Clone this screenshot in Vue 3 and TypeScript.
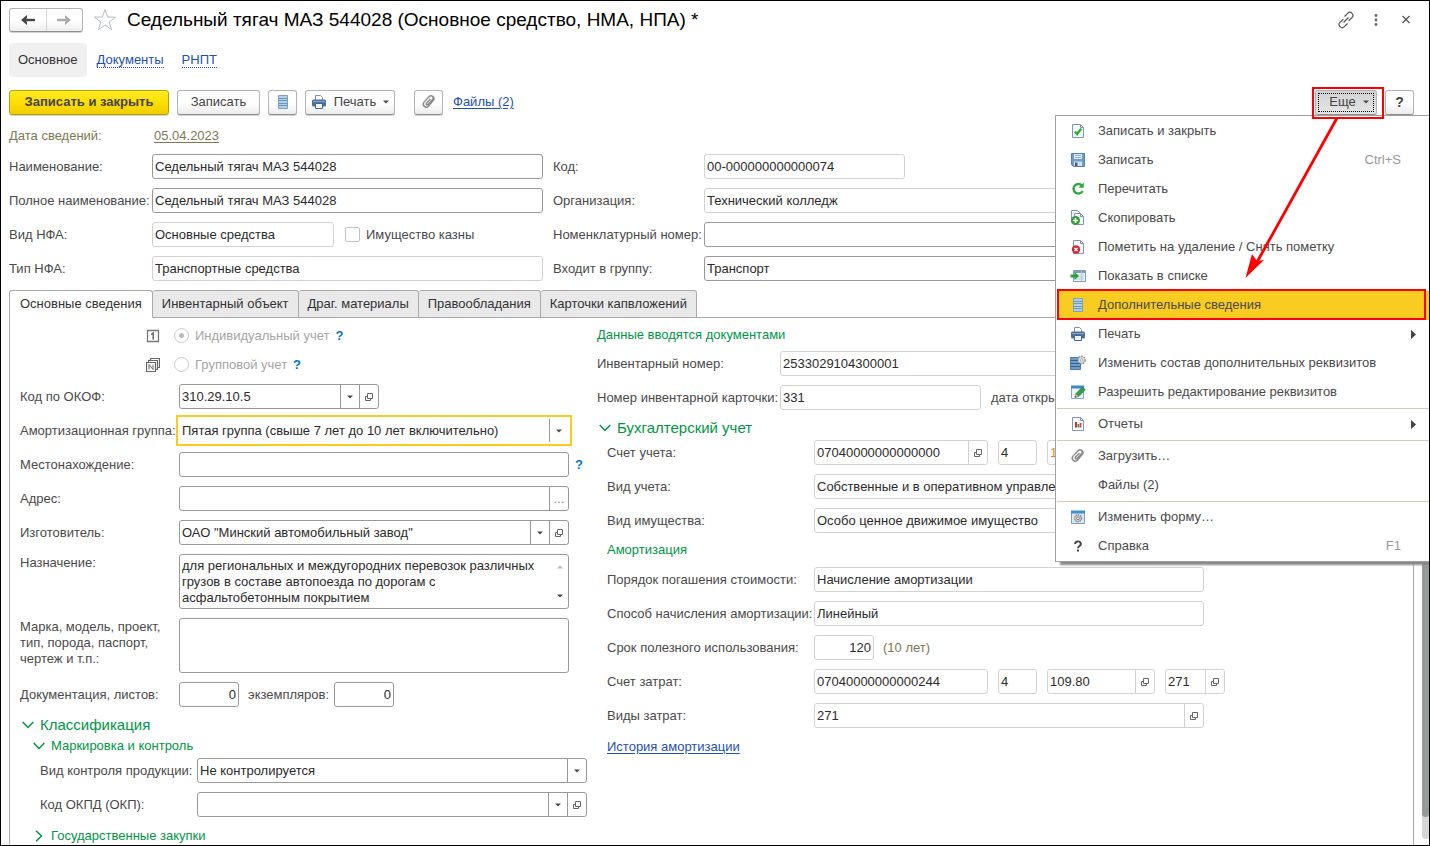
<script setup lang="ts">
import { ref } from 'vue'

interface MenuItem {
  id: string
  text: string
  icon?: string
  shortcut?: string
  submenu?: boolean
  active?: boolean
}

const menuGroups: MenuItem[][] = [
  [
    { id: 'save-close', text: 'Записать и закрыть', icon: 'doc-check' },
    { id: 'save', text: 'Записать', icon: 'floppy', shortcut: 'Ctrl+S' },
    { id: 'reread', text: 'Перечитать', icon: 'refresh' },
    { id: 'copy', text: 'Скопировать', icon: 'copy-add' },
    { id: 'mark', text: 'Пометить на удаление / Снять пометку', icon: 'doc-delete' },
    { id: 'show', text: 'Показать в списке', icon: 'list-go' },
    { id: 'extra', text: 'Дополнительные сведения', icon: 'lines', active: true },
    { id: 'print', text: 'Печать', icon: 'printer', submenu: true },
    { id: 'props', text: 'Изменить состав дополнительных реквизитов', icon: 'lines-gear' },
    { id: 'allow', text: 'Разрешить редактирование реквизитов', icon: 'edit' },
  ],
  [{ id: 'reports', text: 'Отчеты', icon: 'report', submenu: true }],
  [
    { id: 'upload', text: 'Загрузить…', icon: 'clip' },
    { id: 'files', text: 'Файлы (2)' },
  ],
  [
    { id: 'form', text: 'Изменить форму…', icon: 'form-gear' },
    { id: 'help', text: 'Справка', icon: 'question', shortcut: 'F1' },
  ],
]

const tabs = ['Основные сведения', 'Инвентарный объект', 'Драг. материалы', 'Правообладания', 'Карточки капвложений']
const activeTab = ref(tabs[0])

const name = ref('Седельный тягач МАЗ 544028')
const fullName = ref('Седельный тягач МАЗ 544028')
const group = ref('Транспорт')
const okof = ref('310.29.10.5')
const maker = ref('ОАО "Минский автомобильный завод"')
const purpose = ref('для региональных и междугородних перевозок различных грузов в составе автопоезда по дорогам с асфальтобетонным покрытием')
const accounting = ref('single')
</script>

<template>
  <svg class="sprite" aria-hidden="true">
    <symbol id="doc-check" viewBox="0 0 16 16">
      <path d="M2.5 1.5h8l3 3v10h-11z" fill="#f7fafc" stroke="#8297aa" />
      <path d="M10.5 1.5v3h3" fill="none" stroke="#8297aa" />
      <path d="M5 8.6l2.2 2.4 4-5.4" fill="none" stroke="#27b33a" stroke-width="2.4" />
    </symbol>
    <symbol id="floppy" viewBox="0 0 16 16">
      <path d="M1.5 1.5h13v13h-11l-2-2z" fill="#6d9ccd" stroke="#5580aa" />
      <path d="M4 2h8v5H4z" fill="#dfeaf4" />
      <path d="M5 3.5h6M5 5.5h6" stroke="#8fb0cf" />
      <path d="M4 9.5h8V14H4z" fill="#d5e1ec" />
      <path d="M5 10.5h2.5V14H5z" fill="#3c618a" />
    </symbol>
    <symbol id="refresh" viewBox="0 0 16 16">
      <path d="M12 4.6A4.8 4.8 0 1 0 12.6 10" fill="none" stroke="#33a83c" stroke-width="2.4" />
      <path d="M8.6 6.8h5.2V1.4z" fill="#33a83c" />
    </symbol>
    <symbol id="copy-add" viewBox="0 0 16 16">
      <path d="M1.5.5h6l3 3v9h-9z" fill="#eef3f7" stroke="#8297aa" />
      <path d="M4.5 3.5h6l3 3v8h-9z" fill="#f7fafc" stroke="#8297aa" />
      <path d="M10.5 3.5v3h3" fill="none" stroke="#8297aa" />
      <circle cx="5.5" cy="10.5" r="4.5" fill="#2f9e3a" />
      <path d="M5.5 8v5M3 10.5h5" stroke="#fff" stroke-width="1.6" />
    </symbol>
    <symbol id="doc-delete" viewBox="0 0 16 16">
      <path d="M3.5 1.5h7l3 3v10h-10z" fill="#f7fafc" stroke="#8297aa" />
      <path d="M10.5 1.5v3h3" fill="none" stroke="#8297aa" />
      <circle cx="6" cy="10.5" r="4.2" fill="#d22c36" />
      <path d="M4.5 9l3 3M7.5 9l-3 3" stroke="#fff" stroke-width="1.3" />
    </symbol>
    <symbol id="list-go" viewBox="0 0 16 16">
      <path d="M3.5 2.5h12v11h-12z" fill="#f4f8fb" stroke="#7f9cb8" />
      <path d="M4 4h11" stroke="#7f9cb8" stroke-width="2" />
      <path d="M11.5 3v10M5 7h9M5 9h9M5 11h9" stroke="#b3c6d6" />
      <path d="M.5 6.500h4V4L9 8l-4.500 4V9.500h-4z" fill="#27a23a" />
    </symbol>
    <symbol id="lines" viewBox="0 0 16 16">
      <path d="M3.5 1.5h9v13h-9z" fill="#b4cfe6" stroke="#7ba0c2" />
      <path d="M4 4.5h8M4 6.500h8M4 9.500h8M4 11.500h8" stroke="#6c97bd" />
    </symbol>
    <symbol id="printer" viewBox="0 0 16 16">
      <path d="M4.5 6V1.500h5l2 2V6" fill="#fff" stroke="#7893ab" />
      <rect x="1" y="5.500" width="14" height="7" rx="1.500" fill="#4d7298" />
      <path d="M2 7.500h12" stroke="#8baac6" />
      <path d="M4.500 9.500h7v5h-7z" fill="#f2f6fa" stroke="#466a8f" />
    </symbol>
    <symbol id="lines-gear" viewBox="0 0 16 16">
      <path d="M.5 2.500h10v12h-10z" fill="#6f9ecb" stroke="#4e7ba6" />
      <path d="M1 5.500h9M1 8.500h9M1 11.500h9" stroke="#355f8a" />
      <circle cx="11.500" cy="5" r="3.500" fill="#e4e6e8" stroke="#85898d" stroke-width="1.800" stroke-dasharray="1.600 1" />
      <circle cx="11.500" cy="5" r="3.300" fill="#e0e2e4" stroke="#999" stroke-width=".6" />
      <circle cx="11.500" cy="5" r="1.200" fill="#fff" stroke="#888" stroke-width=".6" />
    </symbol>
    <symbol id="edit" viewBox="0 0 16 16">
      <path d="M1.500 2.500h12v12h-12z" fill="#edf5fb" stroke="#83a7c4" />
      <path d="M1 3h13" stroke="#3c8bc9" stroke-width="3" />
      <path d="M5 13.500l1-4 6.500-6.500 2.800 2.800L9 12.300z" fill="#2f9e44" stroke="#2b6e3b" stroke-width=".6" />
      <path d="M5 13.500l.9-3.600 2.800 2.500z" fill="#e0b27c" />
      <path d="M5 13.500l.4-1.500 1.100 1z" fill="#333" />
    </symbol>
    <symbol id="report" viewBox="0 0 16 16">
      <path d="M2.500 1.500h8l3 3v10h-11z" fill="#f7fafc" stroke="#8297aa" />
      <path d="M10.500 1.500v3h3" fill="none" stroke="#8297aa" />
      <path d="M5 6h2v5.500H5z" fill="#d92b2b" />
      <path d="M7.500 8h1.800v3.500H7.500z" fill="#2ba044" />
      <path d="M9.700 7h1.800v4.500H9.700z" fill="#e04a3a" />
    </symbol>
    <symbol id="clip" viewBox="0 0 16 16">
      <path d="M12.800 5.800L7.600 12a3 3 0 0 1-4.600-3.900l5.200-5.600a2.200 2.200 0 0 1 3.400 2.900L7 10.500a1 1 0 0 1-1.600-1.300L9.400 4.900M12.800 5.800a2.600 2.600 0 0 0-2.500-3.800" fill="none" stroke="#8b8b8b" stroke-width="1.400" />
    </symbol>
    <symbol id="form-gear" viewBox="0 0 16 16">
      <path d="M1.500 2.500h13v12h-13z" fill="#dde7ef" stroke="#7d9db9" />
      <path d="M1 3h14" stroke="#3f8fd0" stroke-width="3" />
      <circle cx="8" cy="9.300" r="3.400" fill="#d8dbde" stroke="#85898d" stroke-width="1.600" stroke-dasharray="1.400 .8" />
      <circle cx="8" cy="9.300" r="1.400" fill="#fff" stroke="#777" />
    </symbol>
    <symbol id="question" viewBox="0 0 16 16">
      <path d="M5.200 6a2.800 2.500 0 1 1 4.300 2c-.9.600-1.500 1-1.500 2.200" fill="none" stroke="#444" stroke-width="1.900" />
      <path d="M7 11.500h2v2H7z" fill="#444" />
    </symbol>
    <symbol id="open" viewBox="0 0 10 10">
      <path d="M3.500 1.500h5v5h-5zM3.500 4.500h-2v4h5v-2" fill="none" stroke="#666" />
    </symbol>
    <symbol id="down" viewBox="0 0 6 4"><path d="M0 .5h6L3 3.500z" fill="#4a4a4a" /></symbol>
    <symbol id="chevron" viewBox="0 0 12 8"><path d="M.7 1L6 6.500 11.300 1" fill="none" stroke="#009646" stroke-width="1.500" /></symbol>
  </svg>

  <div class="window">
    <header class="titlebar">
      <div class="history">
        <button type="button" aria-label="Назад">
          <svg width="16" height="12" viewBox="0 0 16 12"><path d="M4 6h11" stroke="#444" stroke-width="2.400" /><path d="M1 6l6-5v3L5 6l2 2v3z" fill="#444" /></svg>
        </button>
        <button type="button" aria-label="Вперед">
          <svg width="16" height="12" viewBox="0 0 16 12"><path d="M1 6h11" stroke="#aaa" stroke-width="2.400" /><path d="M15 6L9 1v3l2 2-2 2v3z" fill="#aaa" /></svg>
        </button>
      </div>
      <button type="button" class="bare" aria-label="В избранное">
        <svg width="24" height="24" viewBox="0 0 24 24"><path d="M12 1.500l2.600 7.600h8l-6.400 4.900 2.400 7.700L12 17l-6.600 4.700L7.800 14 1.400 9.100h8z" fill="#fff" stroke="#b4bcc4" /></svg>
      </button>
      <h1>Седельный тягач МАЗ 544028 (Основное средство, НМА, НПА) *</h1>
      <div class="window-tools">
        <button type="button" class="bare" aria-label="Ссылка">
          <svg width="18" height="18" viewBox="0 0 18 18"><path d="M7.500 5.500l3.200-3.200a2.900 2.900 0 0 1 4.300 4.300l-3.300 3.200M10.500 12.500l-3.200 3.200A2.900 2.900 0 0 1 3 11.400l3.300-3.200M6.500 11.500l5-5" fill="none" stroke="#555" stroke-width="1.200" /></svg>
        </button>
        <button type="button" class="bare" aria-label="Действия">
          <svg width="18" height="18" viewBox="0 0 18 18" fill="#666"><circle cx="9" cy="4.500" r="1.400" /><circle cx="9" cy="9" r="1.400" /><circle cx="9" cy="13.500" r="1.400" /></svg>
        </button>
        <button type="button" class="bare" aria-label="Закрыть">
          <svg width="18" height="18" viewBox="0 0 18 18"><path d="M5.500 5l7 7M12.500 5l-7 7" stroke="#555" stroke-width="1.200" /></svg>
        </button>
      </div>
    </header>

    <nav class="sections">
      <span class="section current">Основное</span>
      <a class="section" href="#documents"><span>Документы</span></a>
      <a class="section" href="#rnpt"><span>РНПТ</span></a>
    </nav>

    <div class="toolbar">
      <button type="button" class="btn primary">Записать и закрыть</button>
      <button type="button" class="btn save">Записать</button>
      <button type="button" class="btn square" aria-label="Дополнительные сведения"><svg class="ico"><use href="#lines" /></svg></button>
      <button type="button" class="btn print"><svg class="ico"><use href="#printer" /></svg>Печать<svg class="caret"><use href="#down" /></svg></button>
      <button type="button" class="btn square clip" aria-label="Присоединенные файлы"><svg class="ico"><use href="#clip" /></svg></button>
      <a class="link" href="#files">Файлы (2)</a>
      <div class="more">
        <button type="button" class="btn pressed" aria-haspopup="menu" aria-expanded="true"><span>Еще<svg class="caret"><use href="#down" /></svg></span></button>
        <button type="button" class="btn help">?</button>

        <div class="menu" role="menu">
          <div v-for="(items, g) in menuGroups" :key="g" class="menu-group">
            <button v-for="item in items" :key="item.id" type="button" role="menuitem" class="menu-item" :class="{ active: item.active }">
              <span class="menu-icon"><svg v-if="item.icon" class="ico"><use :href="'#' + item.icon" /></svg></span>
              <span class="menu-text">{{ item.text }}</span>
              <span v-if="item.shortcut" class="shortcut">{{ item.shortcut }}</span>
              <svg v-if="item.submenu" class="sub" viewBox="0 0 5 9"><path d="M0 0l5 4.500L0 9z" fill="#444" /></svg>
            </button>
          </div>
          <svg class="arrow" width="100" height="164" viewBox="0 0 100 164">
            <path d="M92 2L11 148" stroke="#f00" stroke-width="2.800" />
            <path d="M.5 162L7 138l5 7 7-1z" fill="#f00" />
          </svg>
        </div>
        <div class="mark" />
      </div>
    </div>

    <div class="body">
      <main class="form">
        <div class="date"><span class="label">Дата сведений:</span><a href="#date">05.04.2023</a></div>

        <div class="head">
          <div class="head-left">
            <div class="row"><label for="name">Наименование:</label><div class="field"><input id="name" v-model="name" type="text"></div></div>
            <div class="row"><label for="full">Полное наименование:</label><div class="field"><input id="full" v-model="fullName" type="text"></div></div>
            <div class="row">
              <label for="kind">Вид НФА:</label>
              <div class="field locked w-kind"><input id="kind" type="text" value="Основные средства" readonly></div>
              <input id="treasury" type="checkbox"><label for="treasury" class="inline">Имущество казны</label>
            </div>
            <div class="row"><label for="type">Тип НФА:</label><div class="field locked"><input id="type" type="text" value="Транспортные средства" readonly></div></div>
          </div>
          <div class="head-right">
            <div class="row"><label for="code">Код:</label><div class="field locked w-code"><input id="code" type="text" value="00-000000000000074" readonly></div></div>
            <div class="row"><label for="org">Организация:</label><div class="field locked"><input id="org" type="text" value="Технический колледж" readonly></div></div>
            <div class="row"><label for="nomen">Номенклатурный номер:</label><div class="field"><input id="nomen" type="text"></div></div>
            <div class="row"><label for="group">Входит в группу:</label><div class="field"><input id="group" v-model="group" type="text"></div></div>
          </div>
        </div>

        <div class="tabs" role="tablist">
          <button v-for="t in tabs" :key="t" type="button" role="tab" class="tab" :class="{ on: t === activeTab }" :aria-selected="t === activeTab" @click="activeTab = t">{{ t }}</button>
          <div class="tabs-rest" />
        </div>

        <div class="panel">
          <section class="left">
            <div class="radio-row">
              <svg width="14" height="14" viewBox="0 0 14 14" fill="none"><path d="M1.500 1.500h11v11h-11z" stroke="#777" stroke-width="1.300" /><path d="M5.200 5.500L7.200 4v6.500" stroke="#666" stroke-width="1.500" /></svg>
              <input id="single" v-model="accounting" type="radio" value="single" disabled>
              <label for="single">Индивидуальный учет</label><a class="q" href="#help-single">?</a>
            </div>
            <div class="radio-row">
              <svg width="14" height="14" viewBox="0 0 14 14" fill="none"><path d="M.500 4.500h9v9h-9zM2.500 4.500v-2h9v9h-2M4.500 2.500v-2h9v9h-2" stroke="#666" stroke-width="1.200" /><path d="M3 11.500v-5l4 5v-5" stroke="#666" /></svg>
              <input id="multi" v-model="accounting" type="radio" value="multi" disabled>
              <label for="multi">Групповой учет</label><a class="q" href="#help-multi">?</a>
            </div>
            <div class="row first">
              <label for="okof">Код по ОКОФ:</label>
              <div class="field w-okof"><input id="okof" v-model="okof" type="text"><button type="button" aria-label="Выбрать"><svg class="caret"><use href="#down" /></svg></button><button type="button" aria-label="Открыть"><svg class="open"><use href="#open" /></svg></button></div>
            </div>
            <div class="row">
              <label for="amort">Амортизационная группа:</label>
              <div class="field w-main focus"><select id="amort"><option>Пятая группа (свыше 7 лет до 10 лет включительно)</option></select><span class="drop"><svg class="caret"><use href="#down" /></svg></span></div>
            </div>
            <div class="row">
              <label for="place">Местонахождение:</label>
              <div class="field w-main"><input id="place" type="text"></div><a class="q" href="#help-place">?</a>
            </div>
            <div class="row">
              <label for="address">Адрес:</label>
              <div class="field w-main"><input id="address" type="text"><button type="button" class="dots" aria-label="Заполнить адрес">...</button></div>
            </div>
            <div class="row">
              <label for="maker">Изготовитель:</label>
              <div class="field w-main"><input id="maker" v-model="maker" type="text"><button type="button" aria-label="Выбрать"><svg class="caret"><use href="#down" /></svg></button><button type="button" aria-label="Открыть"><svg class="open"><use href="#open" /></svg></button></div>
            </div>
            <div class="row top">
              <label for="purpose">Назначение:</label>
              <div class="field area w-main"><textarea id="purpose" v-model="purpose" /><span class="scroll"><svg class="caret up"><use href="#down" /></svg><svg class="caret"><use href="#down" /></svg></span></div>
            </div>
            <div class="row top">
              <label for="model">Марка, модель, проект, тип, порода, паспорт, чертеж и т.п.:</label>
              <div class="field area w-main"><textarea id="model" /></div>
            </div>
            <div class="row">
              <label for="sheets">Документация, листов:</label>
              <div class="field w-num"><input id="sheets" class="num" type="text" value="0"></div>
              <label for="copies" class="copies">экземпляров:</label>
              <div class="field w-num"><input id="copies" class="num" type="text" value="0"></div>
            </div>

            <button type="button" class="fold big"><svg class="chev"><use href="#chevron" /></svg>Классификация</button>
            <div class="nested">
              <button type="button" class="fold"><svg class="chev"><use href="#chevron" /></svg>Маркировка и контроль</button>
              <div class="row class-row">
                <label for="control">Вид контроля продукции:</label>
                <div class="field w-main"><select id="control"><option>Не контролируется</option></select><span class="drop"><svg class="caret"><use href="#down" /></svg></span></div>
              </div>
              <div class="row class-row">
                <label for="okpd">Код ОКПД (ОКП):</label>
                <div class="field w-main"><input id="okpd" type="text"><button type="button" aria-label="Выбрать"><svg class="caret"><use href="#down" /></svg></button><button type="button" aria-label="Открыть"><svg class="open"><use href="#open" /></svg></button></div>
              </div>
              <button type="button" class="fold"><svg class="chev closed"><use href="#chevron" /></svg>Государственные закупки</button>
            </div>
          </section>

          <section class="right">
            <h2 class="entered">Данные вводятся документами</h2>
            <div class="row"><label for="inv">Инвентарный номер:</label><div class="field locked"><input id="inv" type="text" value="2533029104300001" readonly></div></div>
            <div class="row"><label for="card">Номер инвентарной карточки:</label><div class="field locked w-card"><input id="card" type="text" value="331" readonly></div><span class="opened">дата открытия:</span></div>
            <button type="button" class="fold big account"><svg class="chev"><use href="#chevron" /></svg>Бухгалтерский учет</button>
            <div class="ledger">
              <div class="row">
                <label for="acc">Счет учета:</label>
                <div class="parts">
                  <div class="field locked w-acc"><input id="acc" type="text" value="07040000000000000" readonly><button type="button" aria-label="Открыть"><svg class="open"><use href="#open" /></svg></button></div>
                  <div class="field locked w-kfo"><input type="text" value="4" aria-label="КФО" readonly></div>
                  <div class="field locked w-sub accent"><input type="text" value="1" aria-label="Счет" readonly></div>
                </div>
              </div>
              <div class="row"><label for="accKind">Вид учета:</label><div class="field locked w-main"><input id="accKind" type="text" value="Собственные и в оперативном управлении" readonly></div></div>
              <div class="row"><label for="prop">Вид имущества:</label><div class="field locked w-main"><input id="prop" type="text" value="Особо ценное движимое имущество" readonly></div></div>
              <h2 class="depreciation">Амортизация</h2>
              <div class="row"><label for="order">Порядок погашения стоимости:</label><div class="field locked w-main"><input id="order" type="text" value="Начисление амортизации" readonly></div></div>
              <div class="row"><label for="method">Способ начисления амортизации:</label><div class="field locked w-main"><input id="method" type="text" value="Линейный" readonly></div></div>
              <div class="row"><label for="term">Срок полезного использования:</label><div class="field locked w-num"><input id="term" class="num" type="text" value="120" readonly></div><span class="years">(10 лет)</span></div>
              <div class="row">
                <label for="cost">Счет затрат:</label>
                <div class="parts">
                  <div class="field locked w-acc"><input id="cost" type="text" value="07040000000000244" readonly></div>
                  <div class="field locked w-kfo"><input type="text" value="4" aria-label="КФО затрат" readonly></div>
                  <div class="field locked w-sub"><input type="text" value="109.80" aria-label="Счет" readonly><button type="button" aria-label="Открыть"><svg class="open"><use href="#open" /></svg></button></div>
                  <div class="field locked w-num"><input type="text" value="271" aria-label="КЭК" readonly><button type="button" aria-label="Открыть"><svg class="open"><use href="#open" /></svg></button></div>
                </div>
              </div>
              <div class="row"><label for="costKinds">Виды затрат:</label><div class="field locked w-main"><input id="costKinds" type="text" value="271" readonly><button type="button" aria-label="Открыть"><svg class="open"><use href="#open" /></svg></button></div></div>
              <a class="link history-link" href="#history">История амортизации</a>
            </div>
          </section>
        </div>
      </main>
      <div class="track"><div class="thumb" /></div>
    </div>
  </div>
</template>

<style>
body {
  margin: 0;
  background: #fff;
}
</style>

<style scoped>
* {
  box-sizing: border-box;
}
.sprite {
  position: absolute;
  width: 0;
  height: 0;
}
.window {
  display: flex;
  flex-direction: column;
  height: 100vh;
  overflow: hidden;
  border: 1px solid #000;
  padding-left: 8px;
  background: #fff;
  color: #4a4a4a;
  font: 13px/16px "Liberation Sans", Arial, sans-serif;
}
button,
input,
select,
textarea {
  margin: 0;
  font: inherit;
  color: inherit;
}
h1,
h2 {
  margin: 0;
  font-weight: normal;
}
.bare {
  display: flex;
  padding: 0;
  border: 0;
  background: none;
}
.ico {
  width: 16px;
  height: 16px;
  flex: none;
}
.caret {
  width: 6px;
  height: 4px;
  flex: none;
}
.open {
  width: 10px;
  height: 10px;
}
.link {
  color: #1d50b5;
  text-decoration: underline;
  text-underline-offset: 2px;
}

.titlebar {
  display: flex;
  align-items: center;
  flex: none;
  height: 38px;
}
.history {
  display: flex;
  width: 74px;
  height: 24px;
  margin-right: 10px;
  border: 1px solid #b4b4b4;
  border-bottom-color: #909090;
  border-radius: 3px;
  background: linear-gradient(#fff 50%, #eee);
  box-shadow: 0 1px 0 #d0d0d0;
}
.history button {
  display: flex;
  flex: 1;
  align-items: center;
  justify-content: center;
  padding: 0;
  border: 0;
  background: none;
}
.history button + button {
  border-left: 1px solid #d4d4d4;
}
h1 {
  margin-left: 10px;
  flex: 1;
  color: #000;
  font-size: 19px;
  line-height: 24px;
}
.window-tools {
  display: flex;
  gap: 12px;
  margin-right: 14px;
}

.sections {
  display: flex;
  align-items: center;
  flex: none;
  height: 34px;
  margin-top: 4px;
}
.section {
  margin-right: 18px;
  color: #1d50b5;
  text-decoration: none;
}
.section span {
  border-bottom: 1px dotted #1d50b5;
}
.section.current {
  margin-right: 10px;
  padding: 9px;
  border-radius: 4px;
  background: #f0f0f0;
  color: #333;
}

.toolbar {
  display: flex;
  align-items: center;
  flex: none;
  height: 26px;
  margin: 12px 15px 0 0;
}
.btn {
  display: flex;
  align-items: center;
  justify-content: center;
  height: 25px;
  margin-right: 8px;
  padding: 0;
  border: 1px solid #b4b4b4;
  border-bottom-color: #8e8e8e;
  border-radius: 3px;
  background: linear-gradient(#fff 50%, #ececec);
  box-shadow: 0 1px 0 #d4d4d4;
  color: #444;
}
.btn.primary {
  width: 160px;
  border-color: #b8a100;
  background: linear-gradient(#ffea25, #ffdf00 50%, #f0cd00);
  font-weight: bold;
}
.btn.save {
  width: 83px;
}
.btn.square {
  width: 29px;
}
.btn.print {
  width: 90px;
  gap: 7px;
}
.btn.clip {
  margin: 0 10px 0 11px;
}
.more {
  position: relative;
  display: flex;
  margin-left: auto;
}
.btn.pressed {
  width: 62px;
  background: linear-gradient(#d2d2d2, #e6e6e6);
}
.btn.pressed span {
  display: flex;
  align-items: center;
  gap: 7px;
  height: 19px;
  padding: 0 4px 0 10px;
  border: 1px dotted #000;
}
.btn.help {
  width: 29px;
  margin: 0;
  font-size: 14px;
  font-weight: bold;
}
.mark {
  position: absolute;
  top: -3px;
  right: 30px;
  z-index: 4;
  width: 72px;
  height: 32px;
  border: 2px solid #f00;
  pointer-events: none;
}

.menu {
  position: absolute;
  top: 25px;
  right: -15px;
  z-index: 3;
  width: 374px;
  padding: 1px 0 0 1px;
  border: 1px solid #a0a0a0;
  border-right: 0;
  background: #fff;
  box-shadow: 5px 3px 2px #888;
}
.menu-group + .menu-group {
  margin-top: 1px;
  border-top: 1px solid #d2cdb4;
  padding-top: 1px;
}
.menu-item {
  position: relative;
  display: flex;
  align-items: center;
  width: 100%;
  height: 29px;
  padding: 0 13px;
  border: 0;
  background: none;
  text-align: left;
}
.menu-item.active {
  background: #f9cc22;
}
.menu-item.active::after {
  position: absolute;
  inset: -2px 3px 0 0;
  border: 2px solid #f00;
  content: "";
}
.menu-icon {
  display: flex;
  width: 28px;
}
.menu-text {
  flex: 1;
  white-space: nowrap;
}
.shortcut {
  margin-right: 15px;
  color: #999;
}
.sub {
  width: 5px;
  height: 9px;
}
.arrow {
  position: absolute;
  top: 0;
  left: 189px;
  pointer-events: none;
}

.body {
  display: flex;
  flex: 1;
  min-height: 0;
}
.form {
  display: flex;
  flex: 1;
  flex-direction: column;
  min-width: 0;
}
.track {
  width: 7px;
  margin: 0 0 6px 8px;
  border-radius: 4px;
  background: #d6d6d6;
}
.thumb {
  height: 97%;
  border-radius: 4px;
  background: #989a99;
}
.date {
  display: flex;
  align-items: center;
  flex: none;
  height: 39px;
  padding-top: 2px;
  color: #7c7953;
}
.date .label {
  width: 145px;
}
.date a {
  color: inherit;
  text-underline-offset: 2px;
}

.row {
  display: flex;
  align-items: center;
  min-height: 25px;
  margin-bottom: 9px;
}
.row > label {
  flex: none;
  white-space: nowrap;
}
.row.top {
  align-items: flex-start;
}
.row.top > label {
  padding-top: 1px;
  padding-right: 16px;
  white-space: normal;
}
.field {
  display: flex;
  flex: 1;
  min-width: 0;
  height: 25px;
  overflow: hidden;
  border: 1px solid #999;
  border-radius: 3px;
  background: #fff;
  color: #2b2b2b;
}
.field.locked {
  border-color: #d2d2d2;
}
.field input,
.field select,
.field textarea {
  flex: 1;
  width: 0;
  min-width: 0;
  padding: 0 2px;
  border: 0;
  outline: 0;
  background: none;
  appearance: none;
}
.field .num {
  text-align: right;
}
.field button,
.drop {
  display: flex;
  align-items: center;
  justify-content: center;
  flex: none;
  width: 19px;
  padding: 0;
  border: 0;
  border-left: 1px solid #999;
  background: none;
}
.field.locked button {
  border-left-color: #d2d2d2;
}
.field .dots {
  color: #888;
}
.field.focus {
  overflow: visible;
  border-color: transparent;
  outline: 2px solid #f9cc22;
  outline-offset: 1px;
  border-radius: 0;
}
.field.area {
  height: 55px;
}
.field textarea {
  padding: 3px 2px;
  overflow: hidden;
  resize: none;
}
.scroll {
  display: flex;
  flex-direction: column;
  justify-content: space-between;
  width: 11px;
  padding: 10px 0;
}
.caret.up {
  opacity: 0.4;
  transform: rotate(180deg);
}
.row .w-main {
  flex: 0 0 390px;
}
.row .w-kind {
  flex: 0 0 182px;
}
.row .w-code {
  flex: 0 0 201px;
}
.row .w-okof {
  flex: 0 0 200px;
}
.row .w-num {
  flex: 0 0 60px;
}
.row .w-card {
  flex: 0 0 201px;
}
.row .w-acc {
  flex: 0 0 174px;
}
.row .w-kfo {
  flex: 0 0 39px;
}
.row .w-sub {
  flex: 0 0 108px;
}
.accent input {
  color: #d98a1c;
}
.parts {
  display: flex;
  gap: 10px;
}
.row input[type="checkbox"] {
  width: 15px;
  height: 15px;
  margin: 0 6px 0 11px;
  appearance: none;
  border: 1px solid #c2c2c2;
  border-radius: 2px;
}

.head {
  display: flex;
  flex: none;
}
.head-left {
  flex: none;
  width: 534px;
}
.head-left .row > label:first-child {
  width: 143px;
}
.head-right {
  flex: 1;
  min-width: 0;
  margin-left: 10px;
}
.head-right .row > label {
  width: 151px;
}

.tabs {
  display: flex;
  flex: none;
  height: 28px;
}
.tab {
  padding: 0 9px;
  border: 1px solid #aaa;
  border-left-width: 0;
  border-radius: 3px 3px 0 0;
  background: #e9e9e9;
  color: #333;
}
.tab:first-child {
  padding: 0 10px;
  border-left-width: 1px;
}
.tab.on {
  border-bottom-color: #fff;
  background: #fff;
}
.tabs-rest {
  flex: 1;
  border-bottom: 1px solid #aaa;
}
.panel {
  display: flex;
  flex: 1;
  min-height: 0;
  padding: 3px 0 0 10px;
  border: solid #aaa;
  border-width: 0 1px;
}
.left {
  flex: none;
  width: 577px;
}
.left > .row > label:first-child {
  width: 159px;
}
.radio-row {
  display: flex;
  align-items: center;
  height: 29px;
  padding-left: 126px;
  color: #a5a5a5;
}
.radio-row input {
  width: 15px;
  height: 15px;
  margin: 0 6px 0 14px;
  appearance: none;
  border: 1px solid #ccc;
  border-radius: 50%;
}
.radio-row input:checked {
  background: radial-gradient(circle, #bbb 0 2px, transparent 3px);
}
.q {
  margin-left: 6px;
  color: #0077cc;
  font-size: 13px;
  font-weight: bold;
  text-decoration: none;
}
.row.first {
  margin-top: 5px;
}
.row > .copies {
  width: 95px;
  padding-left: 9px;
}
.fold {
  display: flex;
  align-items: center;
  gap: 6px;
  height: 20px;
  padding: 0;
  border: 0;
  background: none;
  color: #009646;
}
.fold.big {
  height: 18px;
  margin: 0 0 2px 2px;
  font-size: 15px;
}
.chev {
  width: 12px;
  height: 8px;
}
.chev.closed {
  transform: rotate(-90deg);
}
.nested {
  padding-left: 13px;
}
.class-row {
  padding-left: 7px;
}
.fold + .class-row {
  margin-top: 2px;
}
.class-row > label {
  width: 157px;
}
.right {
  flex: 1;
  min-width: 0;
}
h2 {
  color: #009646;
  font-size: 13px;
  line-height: 16px;
}
.entered {
  padding: 6px 0 8px;
}
.right .row > label {
  width: 183px;
}
.opened {
  padding-left: 10px;
  white-space: nowrap;
}
.fold.account {
  margin-bottom: 3px;
}
.right .ledger {
  padding-left: 10px;
}
.right .ledger .row > label {
  width: 207px;
}
.depreciation {
  padding-bottom: 9px;
}
.years {
  padding-left: 9px;
  color: #7c7953;
}
.history-link {
  display: inline-block;
  padding-top: 2px;
}
</style>
